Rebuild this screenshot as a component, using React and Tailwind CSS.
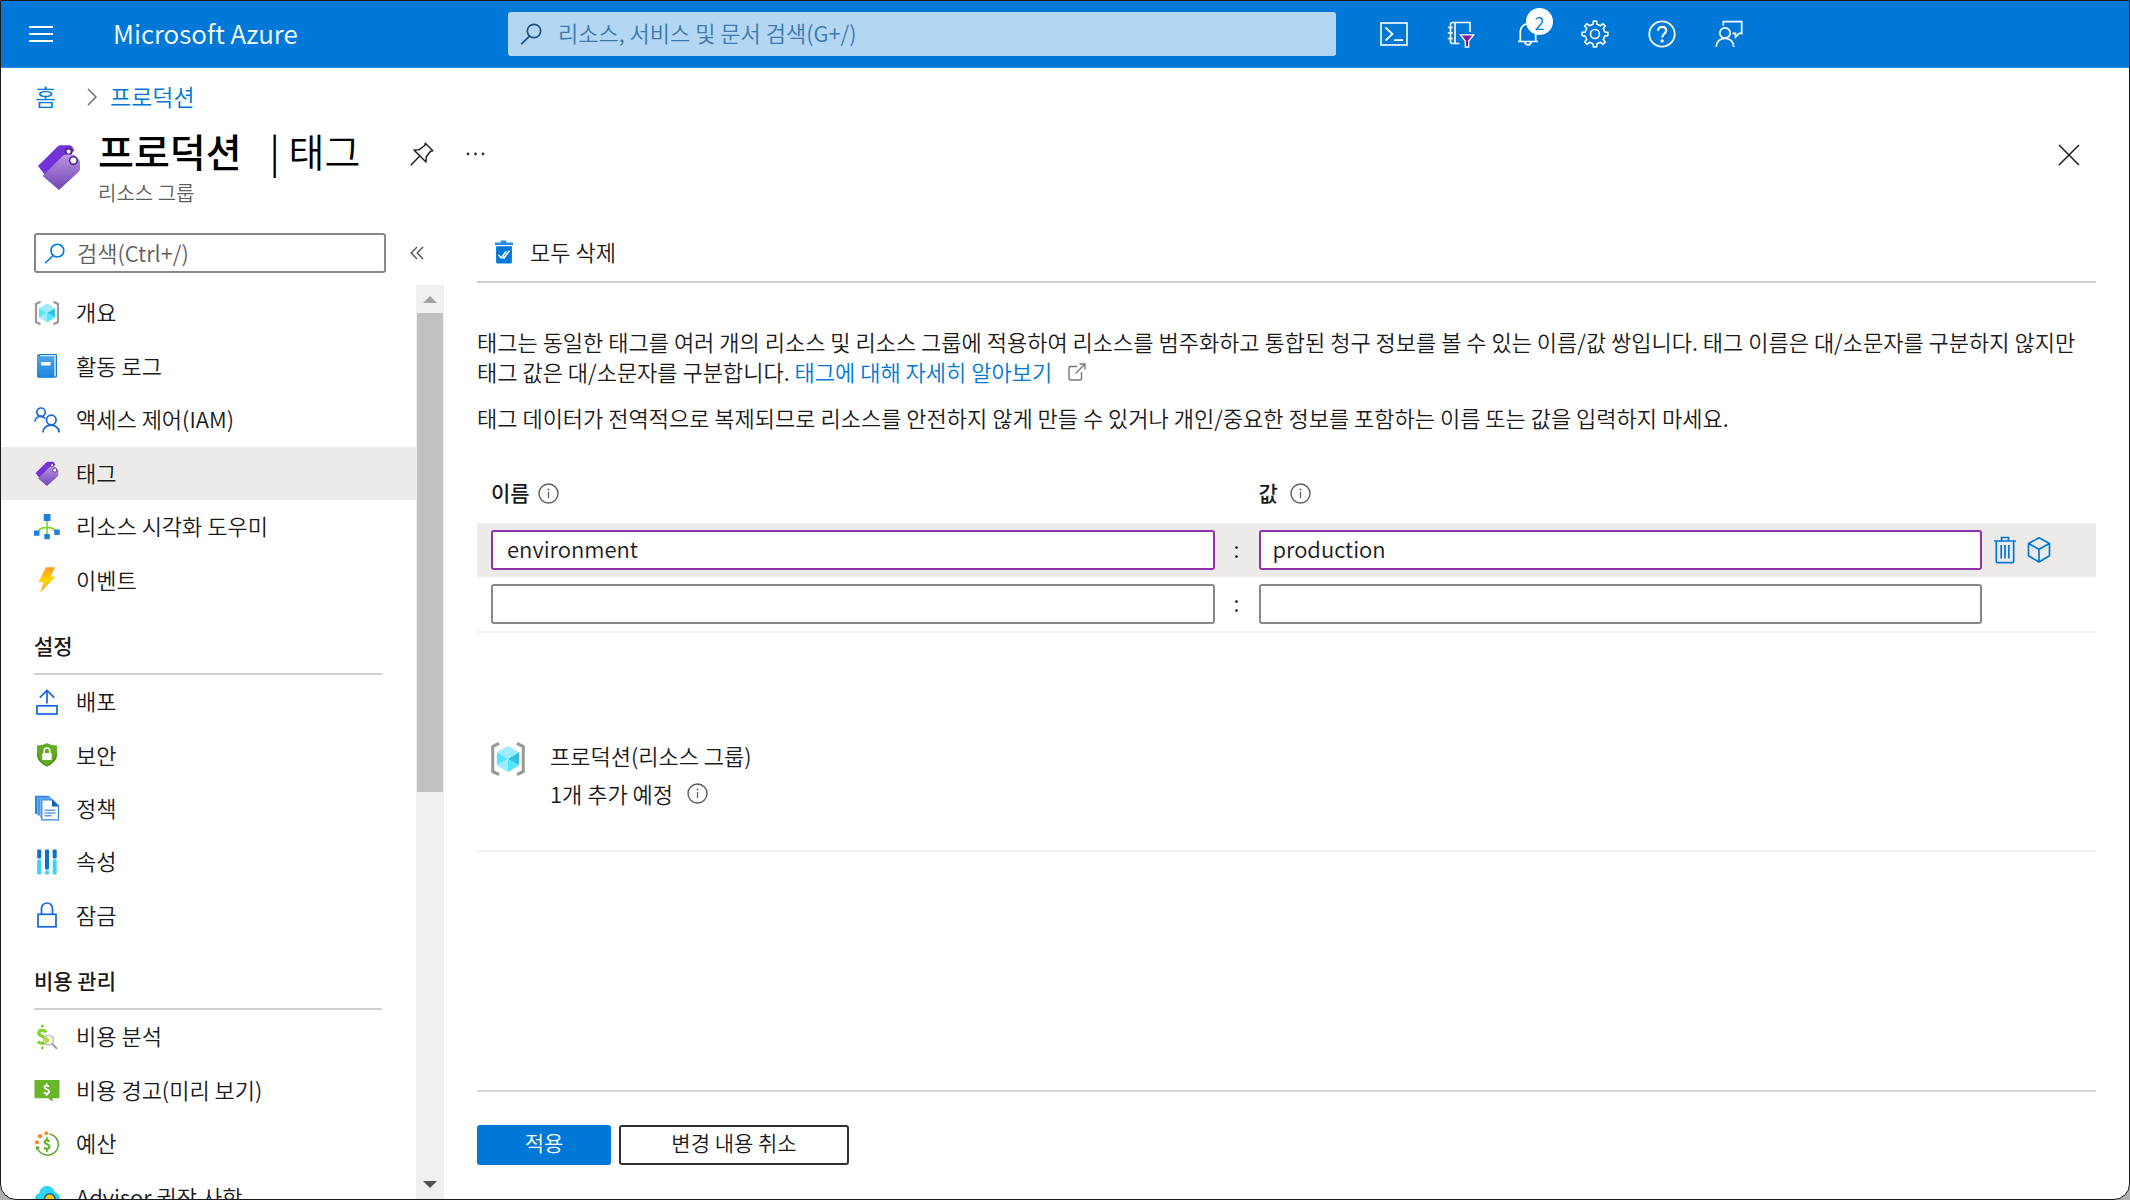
import React from 'react';

function MenuIcon() {
  return (
    <svg width="24" height="18" viewBox="0 0 24 18" stroke="#fff" strokeWidth="2" aria-hidden="true">
      <path d="M0 2h24M0 9h24M0 16h24" />
    </svg>
  );
}

function SearchIcon({ color, size = 22 }) {
  return (
    <svg width={size} height={size} viewBox="0 0 22 22" fill="none" stroke={color} strokeWidth="1.7" aria-hidden="true">
      <circle cx="14" cy="8" r="6.7" />
      <path d="M9.6 13.1L1.2 21.2" />
    </svg>
  );
}

function ShellIcon() {
  return (
    <svg width="28" height="28" viewBox="0 0 28 28" fill="none" stroke="#fff" strokeWidth="1.6" aria-hidden="true">
      <rect x="1" y="3" width="26" height="22" />
      <path d="M5.5 7.5l7 6.5-7 6.5" strokeWidth="1.8" />
      <path d="M14 20.2h9" strokeWidth="1.8" />
    </svg>
  );
}

function DirectoryIcon() {
  return (
    <svg width="28" height="28" viewBox="0 0 28 28" fill="none" stroke="#fff" strokeWidth="1.6" aria-hidden="true">
      <path d="M12.500 23.500H5.500a2 2 0 0 1-2-2v-17a2 2 0 0 1 2-2H23V12M8 2.500v21" />
      <path d="M.8 7.500h5M.8 13h5M.8 18.500h5" />
      <path d="M13.500 14.800h13.200l-5 6.200v6h-3.400v-6z" fill="#881798" strokeWidth="1.300" />
    </svg>
  );
}

function BellIcon() {
  return (
    <svg width="28" height="28" viewBox="0 0 28 28" fill="none" stroke="#fff" strokeWidth="1.7" aria-hidden="true">
      <path d="M4 21.500h20M6.300 21.500V11.500a7.700 7.700 0 0 1 15.400 0v10M10.800 21.500c0 2 1.300 3.300 3.200 3.300s3.200-1.300 3.200-3.300" />
    </svg>
  );
}

function GearIcon() {
  return (
    <svg width="28" height="28" viewBox="0 0 28 28" fill="none" stroke="#fff" strokeWidth="1.6" strokeLinejoin="round" aria-hidden="true">
      <circle cx="14" cy="14" r="4.500" />
      <path d="M12.050 4.200 12.400 1.100h3.200l.35 3.100 3.600 1.500 2.450-1.950 2.250 2.250-1.950 2.450 1.500 3.600 3.100.35v3.200l-3.100.35-1.500 3.600 1.950 2.450-2.250 2.250-2.450-1.950-3.600 1.500-.35 3.100h-3.200l-.35-3.100-3.600-1.500-2.450 1.950-2.250-2.250 1.950-2.450-1.500-3.600-3.100-.35v-3.200l3.100-.35 1.500-3.600-1.950-2.450 2.250-2.250 2.450 1.950z" />
    </svg>
  );
}

function HelpIcon() {
  return (
    <svg width="28" height="28" viewBox="0 0 28 28" fill="none" stroke="#fff" strokeWidth="1.800" aria-hidden="true">
      <circle cx="14" cy="14" r="12.700" />
      <path d="M10 10.800c0-2.300 1.700-4 4.100-4s4.100 1.500 4.100 3.700c0 3.100-4 3.500-4 7" strokeWidth="2.200" />
      <circle cx="14.100" cy="21" r="1.700" fill="#fff" stroke="none" />
    </svg>
  );
}

function FeedbackIcon() {
  return (
    <svg width="28" height="28" viewBox="0 0 28 28" fill="none" stroke="#fff" strokeWidth="1.700" aria-hidden="true">
      <circle cx="10" cy="13" r="5.200" />
      <path d="M1.300 27c0-5.200 3.700-8.700 8.700-8.700s8.700 3.500 8.700 8.700" />
      <path d="M8.300 5.500V1.600h18.400v11.800h-2.500L20.500 17v-3.600h-3" />
    </svg>
  );
}

function TagIcon({ size }) {
  return (
    <svg width={size} height={size} viewBox="0 0 24 24" aria-hidden="true">
      <defs>
        <linearGradient id="tagFront" x1="0" y1="0" x2="0" y2="1">
          <stop offset="0" stopColor="#b796de" />
          <stop offset="1" stopColor="#7244b5" />
        </linearGradient>
      </defs>
      <path d="M1.500 12 11.300 2.300c.5-.5 1-.7 1.700-.7h4.300c.5 0 .9.200 1.200.6l1.200 2.100L5 16.500z" fill="#7433d9" />
      <circle cx="16.800" cy="4.800" r="1.500" fill="#fff" stroke="#4a2291" strokeWidth=".9" />
      <path d="M3.800 17 14.100 6.800c.4-.4.900-.6 1.500-.6h3.200c.5 0 .9.200 1.200.5l2 2.200c.4.400.5.800.5 1.300v3.200c0 .6-.2 1-.6 1.500L12 24z" fill="url(#tagFront)" />
      <circle cx="19.200" cy="9.300" r="1.900" fill="#fff" stroke="#4a2291" strokeWidth=".8" />
    </svg>
  );
}

function PinIcon() {
  return (
    <svg width="24" height="24" viewBox="0 0 24 24" fill="none" stroke="#222" strokeWidth="1.500" strokeLinejoin="round" aria-hidden="true">
      <path d="M15.300 1.200 22.800 8.700l-2.300.5-4.200 5.600-.3 5.200L4 8l5.200-.3L14.800 3.500zM9.500 14.300.8 23.200" />
    </svg>
  );
}

function CloseIcon() {
  return (
    <svg width="22" height="22" viewBox="0 0 22 22" stroke="#222" strokeWidth="1.600" aria-hidden="true">
      <path d="M1 1l20 20M21 1L1 21" />
    </svg>
  );
}

function CollapseIcon() {
  return (
    <svg width="14" height="14" viewBox="0 0 14 14" fill="none" stroke="#555" strokeWidth="1.400" aria-hidden="true">
      <path d="M7 1 1.200 7 7 13M13 1 7.200 7 13 13" />
    </svg>
  );
}

function DeleteAllIcon() {
  return (
    <svg width="20" height="24" viewBox="0 0 22 24" preserveAspectRatio="none" aria-hidden="true">
      <path d="M1 2.600h6.500V.5h6v2.100H21V5H1z" fill="#2b8de0" />
      <path d="M2.300 6.200h17.400V22a1.500 1.500 0 0 1-1.500 1.500H3.800A1.500 1.500 0 0 1 2.300 22z" fill="#0078d7" />
      <path d="M5 14.700l3 3.300 5.500-6.700M9.500 16.500l1.500 1.500 6-7.300" fill="none" stroke="#fff" strokeWidth="1.700" />
    </svg>
  );
}

function ResourceGroupIcon({ size }) {
  return (
    <svg width={size} height={size} viewBox="0 0 34 34" aria-hidden="true">
      <path d="M8.500 2.300 2.600 5.200v23.600l5.900 2.900M25.500 2.300l5.900 2.900v23.600l-5.900 2.900" fill="none" stroke="#999" strokeWidth="2.900" />
      <path d="M17 4.700 27.500 10.700 17 17 6.500 10.700z" fill="#9cebff" />
      <path d="M6.500 10.700 17 17 6.500 23z" fill="#50e6ff" />
      <path d="M27.500 10.700 17 17l10.500 6z" fill="#32bedd" />
      <path d="M6.500 23 17 17v12.300z" fill="#9cebff" />
      <path d="M27.500 23 17 17v12.300z" fill="#50e6ff" />
    </svg>
  );
}

function BookIcon() {
  return (
    <svg width="26" height="26" viewBox="0 0 26 26" aria-hidden="true">
      <defs>
        <linearGradient id="book" x1="0" y1="0" x2="0" y2="1">
          <stop offset="0" stopColor="#4fa3ea" />
          <stop offset="1" stopColor="#1a86dc" />
        </linearGradient>
      </defs>
      <path d="M5 1h17.200c.5 0 .8.300.8.800v21.400c0 .8-.6 1.300-1.300 1.300H5z" fill="#1b78c8" />
      <path d="M5.500 1.900h16.300v20.800l-1.600 1z" fill="#d4e9fa" />
      <path d="M3 3.300h17.300v21.500H4.300c-.7 0-1.300-.5-1.300-1.200z" fill="url(#book)" />
      <path d="M3 3.500C3 2 3.900 1.200 5.300 1.200h1L4.500 3.500z" fill="#1b78c8" />
      <rect x="7" y="9" width="9.500" height="3.600" rx=".5" fill="#fff" />
    </svg>
  );
}

function PeopleIcon() {
  return (
    <svg width="26" height="26" viewBox="0 0 26 26" fill="none" stroke="#1565e0" strokeWidth="1.700" aria-hidden="true">
      <circle cx="7" cy="5.200" r="4.200" />
      <path d="M1 14.500c0-3 2.500-5.200 5.600-5.200 2 0 3.600.8 4.600 2.100" />
      <circle cx="17.300" cy="13" r="4.800" />
      <path d="M9 25.500c0-4.300 3.500-7.300 8-7.300s8 3 8.300 7.300" />
    </svg>
  );
}

function TreeIcon() {
  return (
    <svg width="26" height="26" viewBox="0 0 26 26" aria-hidden="true">
      <path d="M13 7v13M4 19c.5-3 3-5.600 9-5.600s8.500 2.600 9 5.600" fill="none" stroke="#7fd42a" strokeWidth="1.600" />
      <g fill="#1f7fdd">
        <rect x="9.700" y="0" width="6.800" height="7" rx=".6" />
        <rect x="0" y="16.500" width="5.500" height="5.300" rx=".6" />
        <rect x="20.300" y="15.500" width="5.500" height="5.600" rx=".6" />
        <rect x="10.300" y="20" width="5.500" height="5.300" rx=".6" />
      </g>
    </svg>
  );
}

function BoltIcon() {
  return (
    <svg width="26" height="26" viewBox="0 0 26 26" aria-hidden="true">
      <defs>
        <linearGradient id="bolt" x1="0" y1="0" x2="0" y2="1">
          <stop offset="0" stopColor="#ff9a1a" />
          <stop offset=".5" stopColor="#ffd400" />
          <stop offset="1" stopColor="#ffa21a" />
        </linearGradient>
      </defs>
      <path d="M12 .300H21L16.500 9.800H21.500L6 25.700 9.800 15H4.500z" fill="url(#bolt)" />
    </svg>
  );
}

function DeployIcon() {
  return (
    <svg width="26" height="26" viewBox="0 0 26 26" fill="none" stroke="#1565e0" strokeWidth="1.700" aria-hidden="true">
      <rect x="3" y="16.800" width="20" height="8.200" />
      <path d="M13 14.500V1.500M5.800 8.700 13 1.500l7.200 7.200" />
    </svg>
  );
}

function ShieldIcon() {
  return (
    <svg width="26" height="26" viewBox="0 0 26 26" aria-hidden="true">
      <path d="M13 1c2.500 1.700 6 2.500 10 2.500v8.500c0 6-4 9.500-10 12.500C7 21.500 3 18 3 12V3.500C7 3.500 10.500 2.700 13 1z" fill="#65ab22" />
      <path d="M13 24.500c6-3 10-6.500 10-12.500h-1.500c0 5-3.500 8.300-8.500 11-5-2.700-8.500-6-8.500-11H3c0 6 4 9.500 10 12.500z" fill="#4f9116" />
      <rect x="8.300" y="11" width="9.400" height="7" rx=".7" fill="#fff" />
      <path d="M10.200 11.500V8.800a2.800 2.800 0 0 1 5.600 0v2.700" fill="none" stroke="#fff" strokeWidth="1.500" />
    </svg>
  );
}

function PolicyIcon() {
  return (
    <svg width="26" height="26" viewBox="0 0 26 26" aria-hidden="true">
      <path d="M1 .8h13.500l3 2.500V19H1z" fill="#2f86e0" />
      <path d="M3.500 3h14v17.500h-14z" fill="#4a98ea" stroke="#9dc9f7" strokeWidth=".6" />
      <path d="M6 4.500h12V23H6z" fill="#86b9f4" />
      <path d="M7.800 4.800h10.700l6 6v14H7.800z" fill="#fff" stroke="#2f86e0" strokeWidth="1.200" />
      <path d="M18 4.500l6.800 6.900H18z" fill="#0f63b8" />
      <path d="M10.500 15.200h11M10.500 18h11M10.500 20.800h7.500" stroke="#5ea0ef" strokeWidth="1.400" />
    </svg>
  );
}

function PropertiesIcon() {
  return (
    <svg width="26" height="26" viewBox="0 0 26 26" aria-hidden="true">
      <g fill="#0f70cc">
        <rect x="3.200" y=".4" width="4" height="9" rx="1" />
        <rect x="11" y=".4" width="4" height="20" rx="1" />
        <rect x="18.700" y=".4" width="4" height="9" rx="1" />
      </g>
      <g fill="#3fd3ee">
        <rect x="3.200" y="10.600" width="4" height="15" rx="1" />
        <rect x="11" y="21.600" width="4" height="4" rx="1" />
        <rect x="18.700" y="10.600" width="4" height="15" rx="1" />
      </g>
    </svg>
  );
}

function LockIcon() {
  return (
    <svg width="26" height="26" viewBox="0 0 26 26" fill="none" stroke="#1565e0" strokeWidth="1.700" aria-hidden="true">
      <rect x="4" y="12.300" width="18" height="12.500" />
      <path d="M7.500 12.300V6.500a5.500 5.500 0 0 1 11 0v5.800" />
    </svg>
  );
}

const DOLLAR = 'M12.300 8.200C11.300 6.900 9.900 6.300 8.300 6.300c-2.200 0-3.500 1.100-3.500 2.800 0 4 7.700 2.600 7.700 7 0 2-1.600 3.300-4.200 3.300-1.900 0-3.300-.6-4.400-1.900';

function CostAnalysisIcon() {
  return (
    <svg width="26" height="26" viewBox="0 0 26 26" fill="none" aria-hidden="true">
      <path d={DOLLAR} stroke="#7fd42a" strokeWidth="3.200" />
      <circle cx="8.400" cy="2" r="1.500" fill="#7fd42a" />
      <circle cx="8.400" cy="23.800" r="1.500" fill="#7fd42a" />
      <circle cx="14.500" cy="16" r="5" fill="#f4f4f4" fillOpacity=".85" stroke="#b5b5b5" strokeWidth="1.200" />
      <path d="M12 12.600c2.300 1 3.500 2.500 2.800 5.400l-3 1.300c-1.500-2-1.500-4.700.2-6.700z" fill="#b4e01c" />
      <path d="M18.200 19.700 23 24.800" stroke="#999" strokeWidth="1.900" />
    </svg>
  );
}

function CostAlertIcon() {
  return (
    <svg width="26" height="26" viewBox="0 0 26 26" aria-hidden="true">
      <path d="M.500 3h25v18.300H18.500v3.500L14.300 21.300H.500z" fill="#6bb52a" />
      <g transform="translate(7.500 4.700) scale(.61)">
        <path d={DOLLAR} fill="none" stroke="#fff" strokeWidth="2.800" />
        <path d="M8.400 2.500v4M8.400 19.500v4" stroke="#fff" strokeWidth="2.400" />
      </g>
    </svg>
  );
}

function BudgetIcon() {
  return (
    <svg width="26" height="26" viewBox="0 0 26 26" aria-hidden="true">
      <path d="M15.500 2.900A10.700 10.700 0 1 1 3.800 17.800" fill="none" stroke="#5fa528" strokeWidth="1.500" />
      <path d="M2 15l4 1.200-3.800 3z" fill="#5fa528" />
      <g fill="#ff8c1a">
        <circle cx="12.300" cy="2.300" r="2" />
        <circle cx="6" cy="5.200" r="2.100" />
        <circle cx="3" cy="11.300" r="2.100" />
      </g>
      <g transform="translate(7.500 5.300) scale(.64)">
        <path d={DOLLAR} fill="none" stroke="#5fb527" strokeWidth="3.300" />
        <path d="M8.400 1.500v5M8.400 19.500v5" stroke="#5fb527" strokeWidth="2.800" />
      </g>
    </svg>
  );
}

function AdvisorIcon() {
  return (
    <svg width="26" height="26" viewBox="0 0 26 26" aria-hidden="true">
      <path d="M6 20a5.500 5.500 0 0 1-.7-10.800C5.800 5 9 2 13 2c3.800 0 6.800 2.400 7.700 6 3 .5 5 2.700 5 5.800 0 3.500-2.600 6.200-6.200 6.200z" fill="#32d4f5" />
      <circle cx="15.800" cy="15" r="6" fill="#0f5fa8" />
      <circle cx="15.800" cy="15" r="4.500" fill="#ffca00" />
    </svg>
  );
}

function InfoIcon() {
  return (
    <svg width="21" height="21" viewBox="0 0 21 21" fill="none" stroke="#605e5c" aria-hidden="true">
      <circle cx="10.500" cy="10.500" r="9.500" strokeWidth="1.400" />
      <path d="M10.500 9v6" strokeWidth="1.300" />
      <circle cx="10.500" cy="6.500" r=".9" fill="#605e5c" stroke="none" />
    </svg>
  );
}

function ExternalIcon() {
  return (
    <svg width="18" height="18" viewBox="0 0 18 18" fill="none" stroke="#777" strokeWidth="1.400" className="ml-4 inline align-baseline" aria-hidden="true">
      <path d="M9 3.500H2.500a1.500 1.500 0 0 0-1.500 1.500v10.500A1.500 1.500 0 0 0 2.500 17H12a1.500 1.500 0 0 0 1.500-1.500V9M11.500 1H17v5.500M17 1 7.500 10.500" />
    </svg>
  );
}

function TrashIcon() {
  return (
    <svg width="22" height="28" viewBox="0 0 22 28" fill="none" stroke="#0078d7" strokeWidth="1.700" aria-hidden="true">
      <path d="M0 5h22M7.500 5V1.500h7V5M2.300 5v20.200c0 .9.600 1.500 1.500 1.500h14.400c.9 0 1.500-.6 1.500-1.500V5" />
      <path d="M7.200 9v13.500M11 9v13.500M14.800 9v13.500" />
    </svg>
  );
}

function CubeIcon() {
  return (
    <svg width="24" height="28" viewBox="0 0 24 28" fill="none" stroke="#0078d7" strokeWidth="1.700" strokeLinejoin="round" aria-hidden="true">
      <path d="M12 1.800 22.500 7.500v12.300L12 26 1.500 19.800V7.500zM1.500 7.500 12 13.300l10.500-5.800M12 13.300V26" />
    </svg>
  );
}

const menuGroups = [
  {
    title: null,
    listClass: 'h-[321px]',
    items: [
      { label: '개요', icon: <ResourceGroupIcon size={26} /> },
      { label: '활동 로그', icon: <BookIcon /> },
      { label: '액세스 제어(IAM)', icon: <PeopleIcon /> },
      { label: '태그', icon: <TagIcon size={26} />, current: true },
      { label: '리소스 시각화 도우미', icon: <TreeIcon /> },
      { label: '이벤트', icon: <BoltIcon /> },
    ],
  },
  {
    title: '설정',
    listClass: 'h-[267px]',
    items: [
      { label: '배포', icon: <DeployIcon /> },
      { label: '보안', icon: <ShieldIcon /> },
      { label: '정책', icon: <PolicyIcon /> },
      { label: '속성', icon: <PropertiesIcon /> },
      { label: '잠금', icon: <LockIcon /> },
    ],
  },
  {
    title: '비용 관리',
    listClass: 'h-[214px]',
    items: [
      { label: '비용 분석', icon: <CostAnalysisIcon /> },
      { label: '비용 경고(미리 보기)', icon: <CostAlertIcon /> },
      { label: '예산', icon: <BudgetIcon /> },
      { label: 'Advisor 권장 사항', icon: <AdvisorIcon /> },
    ],
  },
];

const toolbar = [
  { label: 'Cloud Shell', icon: <ShellIcon /> },
  { label: '디렉터리 및 구독', icon: <DirectoryIcon /> },
  { label: '알림', icon: <BellIcon />, badge: '2' },
  { label: '설정', icon: <GearIcon /> },
  { label: '도움말', icon: <HelpIcon /> },
  { label: '피드백', icon: <FeedbackIcon /> },
];

function TopBar() {
  return (
    <header className="flex h-[67px] shrink-0 items-center border-b border-[#2b8be0] bg-[#0078d7] text-white">
      <button type="button" aria-label="메뉴" className="ml-7">
        <MenuIcon />
      </button>
      <a href="#home" className="ml-[60px] w-[395px] pb-0.5 text-[26px] leading-8">Microsoft Azure</a>
      <label className="flex h-11 w-[828px] items-center gap-4 rounded-[3px] bg-[#b3d6f2] pl-3">
        <SearchIcon color="#1a4f86" size={22} />
        <input
          type="search"
          aria-label="전체 검색"
          placeholder="리소스, 서비스 및 문서 검색(G+/)"
          className="min-w-0 flex-1 bg-transparent pb-1 text-[22px] text-[#1a4f86] outline-none placeholder:text-[#3d78b0]"
        />
      </label>
      <div className="ml-11 flex gap-[39px]">
        {toolbar.map((t) => (
          <button key={t.label} type="button" aria-label={t.label} className="relative">
            {t.icon}
            {t.badge && (
              <span className="absolute -top-3 left-3 flex size-[27px] items-center justify-center rounded-full bg-white text-[18px] leading-none text-[#0078d7]">
                {t.badge}
              </span>
            )}
          </button>
        ))}
      </div>
    </header>
  );
}

function PageHeading() {
  return (
    <div className="pr-[49px] pl-[34px]">
      <nav aria-label="이동 경로" className="flex h-[58px] items-center text-[23px] text-[#0078d7]">
        <a href="#home" className="w-[52px] pb-0.5">홈</a>
        <svg width="10" height="18" viewBox="0 0 10 18" fill="none" stroke="#666" strokeWidth="1.400" aria-hidden="true">
          <path d="M1 1l8 8-8 8" />
        </svg>
        <a href="#group" className="ml-[13px] pb-0.5">프로덕션</a>
      </nav>
      <div className="flex h-[107px]">
        <div className="mt-4 mr-[15px]">
          <TagIcon size={48} />
        </div>
        <div>
          <div className="flex h-[52px] items-center">
            <h1 className="pb-1 text-[39px] leading-[48px] font-medium text-black">
              프로덕션
              <span className="ml-7 font-[350]">| 태그</span>
            </h1>
            <button type="button" aria-label="고정" className="ml-[50px] pt-1"><PinIcon /></button>
            <button type="button" aria-label="더 보기" className="ml-8 pt-1">
              <svg width="19" height="4" viewBox="0 0 19 4" fill="#333" aria-hidden="true">
                <circle cx="2" cy="2" r="1.400" />
                <circle cx="9.500" cy="2" r="1.400" />
                <circle cx="17" cy="2" r="1.400" />
              </svg>
            </button>
          </div>
          <p className="text-[20px] leading-[30px] text-[#605e5c]">리소스 그룹</p>
        </div>
        <button type="button" aria-label="닫기" className="mt-[18px] ml-auto self-start"><CloseIcon /></button>
      </div>
    </div>
  );
}

function Sidebar() {
  return (
    <aside className="flex w-[443px] shrink-0 flex-col">
      <div className="flex items-center pb-3 pl-[33px]">
        <label className="flex h-10 w-[352px] items-center gap-3 rounded-[3px] border-2 border-[#8a8886] pl-2">
          <SearchIcon color="#0078d7" size={21} />
          <input
            type="search"
            aria-label="메뉴 검색"
            placeholder="검색(Ctrl+/)"
            className="min-w-0 flex-1 bg-transparent pb-0.5 text-[22px] outline-none placeholder:text-[#605e5c]"
          />
        </label>
        <button type="button" aria-label="축소" className="ml-6"><CollapseIcon /></button>
      </div>
      <div className="flex min-h-0 flex-1">
        <nav aria-label="리소스 메뉴" className="min-w-0 flex-1 overflow-hidden pt-px">
          {menuGroups.map((group, i) => (
            <section key={i}>
              {group.title && (
                <h2 className="mr-[34px] ml-[33px] flex h-[68px] items-center border-b-2 border-[#d2d0ce] pt-3 text-[21px] font-medium">
                  {group.title}
                </h2>
              )}
              <ul className={`grid auto-rows-fr ${group.listClass}`}>
                {group.items.map((item) => (
                  <li key={item.label} className="min-h-0">
                    <a
                      href="#menu"
                      aria-current={item.current ? 'page' : undefined}
                      className={`flex h-full items-center gap-4 pl-[33px] text-[22px] ${item.current ? 'bg-[#edebe9]' : ''}`}
                    >
                      {item.icon}
                      <span className="pb-0.5">{item.label}</span>
                    </a>
                  </li>
                ))}
              </ul>
            </section>
          ))}
        </nav>
        <div className="flex w-7 flex-col items-center bg-[#f0f0f0]" aria-hidden="true">
          <div className="flex h-7 items-center">
            <svg width="14" height="8" viewBox="0 0 14 8"><path d="M0 8l7-7 7 7z" fill="#a0a0a0" /></svg>
          </div>
          <div className="h-[479px] w-[26px] bg-[#c1c1c1]" />
          <div className="mt-auto flex h-7 items-center">
            <svg width="14" height="8" viewBox="0 0 14 8"><path d="M0 0l7 7 7-7z" fill="#505050" /></svg>
          </div>
        </div>
      </div>
    </aside>
  );
}

const rowGrid = 'grid grid-cols-[minmax(0,1fr)_44px_minmax(0,1fr)_114px] items-center pl-[14px]';

function TagTable() {
  const rows = [
    { name: 'environment', value: 'production', active: true },
    { name: '', value: '', active: false },
  ];
  return (
    <table className="mt-[31px] block w-full border-b-2 border-[#f3f2f1]">
      <thead className="block">
        <tr className={`${rowGrid} h-[60px] text-left text-[21px]`}>
          <th scope="col" className="flex items-center gap-2 font-medium">이름 <InfoIcon /></th>
          <td />
          <th scope="col" className="flex items-center gap-3 font-medium">값 <InfoIcon /></th>
          <td />
        </tr>
      </thead>
      <tbody className="block">
        {rows.map((row, i) => (
          <tr key={i} className={`${rowGrid} h-[54px] ${row.active ? 'bg-[#edebe9]' : ''}`}>
            <td>
              <input
                type="text"
                aria-label={`이름 ${i + 1}`}
                defaultValue={row.name}
                className={`block h-10 w-full rounded-[3px] border-2 bg-white px-[14px] pb-1 text-[22px] outline-none ${row.active ? 'border-[#9231ac]' : 'border-[#8a8886]'}`}
              />
            </td>
            <td className="pb-1 text-center text-[22px]">:</td>
            <td>
              <input
                type="text"
                aria-label={`값 ${i + 1}`}
                defaultValue={row.value}
                className={`block h-10 w-full rounded-[3px] border-2 bg-white px-3 pb-1 text-[22px] outline-none ${row.active ? 'border-[#9231ac]' : 'border-[#8a8886]'}`}
              />
            </td>
            <td className="flex gap-[11px] pl-3">
              {row.active && (
                <>
                  <button type="button" aria-label="삭제"><TrashIcon /></button>
                  <button type="button" aria-label="리소스"><CubeIcon /></button>
                </>
              )}
            </td>
          </tr>
        ))}
      </tbody>
    </table>
  );
}

function TagsPanel() {
  return (
    <main className="flex min-w-0 flex-1 flex-col pr-[33px] pl-[33px]">
      <div className="flex h-[50px] shrink-0 items-start border-b-2 border-[#d2d0ce] pl-[17px]">
        <button type="button" className="flex h-[38px] items-center gap-4 text-[22px]">
          <DeleteAllIcon />
          <span className="pb-0.5">모두 삭제</span>
        </button>
      </div>
      <div className="mt-[43px] text-[22px] leading-[30px] break-keep">
        <p>
          태그는 동일한 태그를 여러 개의 리소스 및 리소스 그룹에 적용하여 리소스를 범주화하고 통합된 청구 정보를 볼 수 있는 이름/값 쌍입니다. 태그 이름은 대/소문자를 구분하지 않지만 태그 값은 대/소문자를 구분합니다.{' '}
          <a href="#learn" className="text-[#0078d7]">
            태그에 대해 자세히 알아보기<ExternalIcon />
          </a>
        </p>
        <p className="mt-4">
          태그 데이터가 전역적으로 복제되므로 리소스를 안전하지 않게 만들 수 있거나 개인/중요한 정보를 포함하는 이름 또는 값을 입력하지 마세요.
        </p>
      </div>
      <TagTable />
      <section className="mt-[103px] flex gap-6 border-b-2 border-[#f0f0f0] pb-[38px] pl-[13px]">
        <div className="pt-[5px]"><ResourceGroupIcon size={36} /></div>
        <div className="text-[22px] leading-[38px]">
          <h2>프로덕션(리소스 그룹)</h2>
          <p className="flex items-center gap-[14px]">1개 추가 예정 <InfoIcon /></p>
        </div>
      </section>
      <div className="mt-auto flex h-[109px] shrink-0 gap-2 border-t-2 border-[#d8d8d8] pt-[33px]">
        <button type="button" className="h-10 w-[134px] rounded-[3px] bg-[#0078d7] pb-1 text-[21px] text-white">적용</button>
        <button type="button" className="h-10 w-[230px] rounded-[3px] border-2 border-[#323130] bg-white pb-1 text-[21px]">변경 내용 취소</button>
      </div>
    </main>
  );
}

export default function App() {
  return (
    <div className="h-screen bg-[#b0b0b0] font-['Noto_Sans_CJK_KR',sans-serif] font-[350] text-[#1b1a19]">
      <div className="flex h-full flex-col overflow-hidden rounded-b-[16px] border border-[#1a1a1a] bg-white">
        <TopBar />
        <PageHeading />
        <div className="flex min-h-0 flex-1">
          <Sidebar />
          <TagsPanel />
        </div>
      </div>
    </div>
  );
}
